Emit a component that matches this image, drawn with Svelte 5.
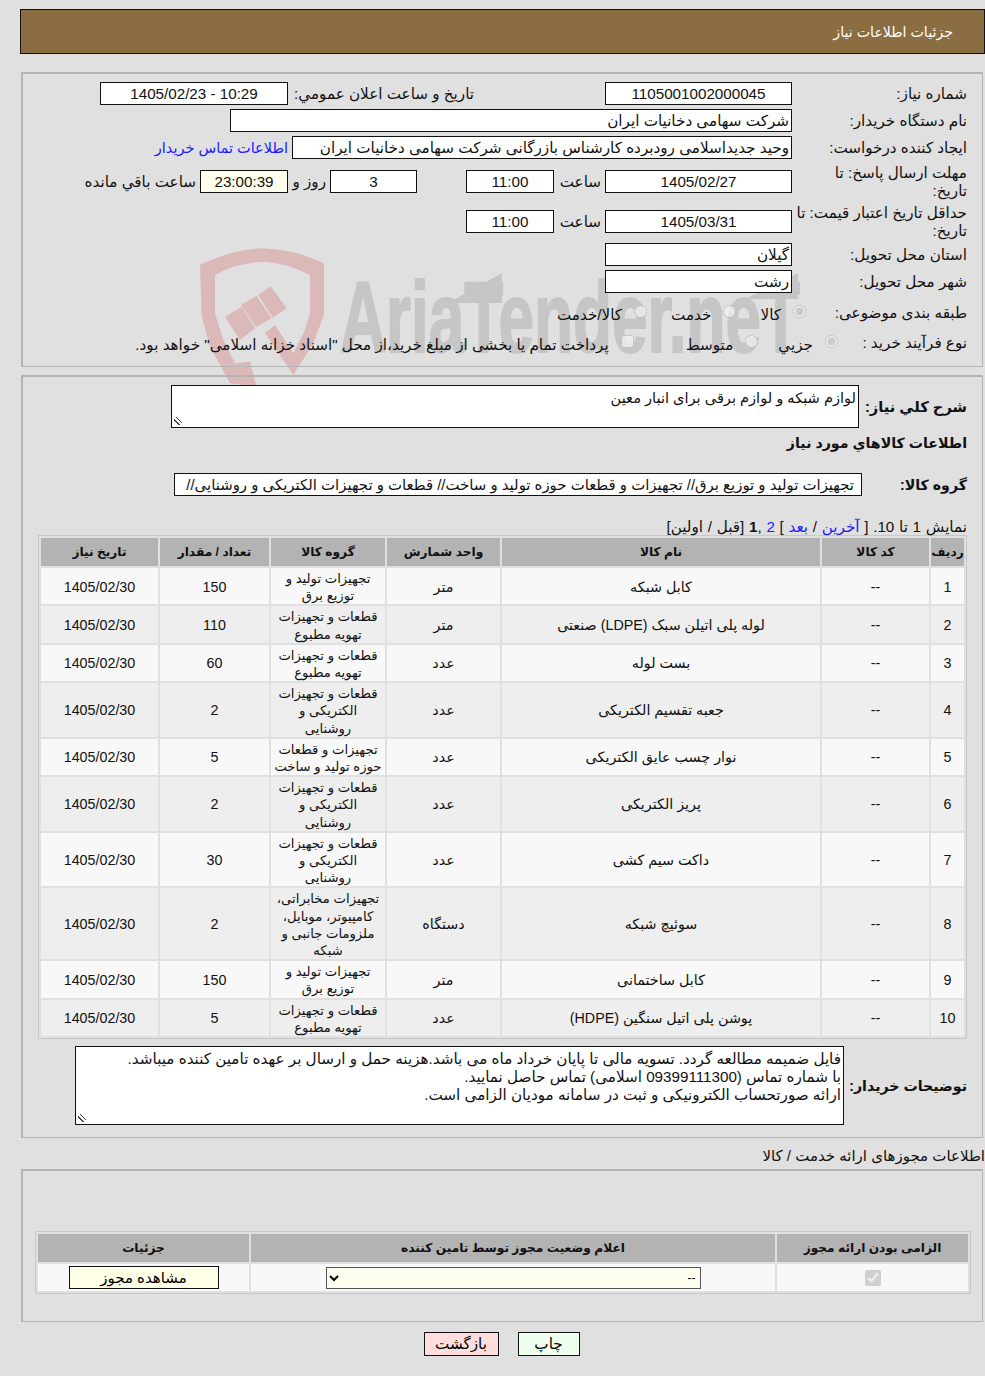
<script>
	const rows = [
		{ name: 'کابل شبکه', unit: 'متر', group: ['تجهیزات تولید و', 'توزیع برق'], qty: 150 },
		{ name: 'لوله پلی اتیلن سبک (LDPE) صنعتی', unit: 'متر', group: ['قطعات و تجهیزات', 'تهویه مطبوع'], qty: 110 },
		{ name: 'بست لوله', unit: 'عدد', group: ['قطعات و تجهیزات', 'تهویه مطبوع'], qty: 60 },
		{ name: 'جعبه تقسیم الکتریکی', unit: 'عدد', group: ['قطعات و تجهیزات', 'الکتریکی و', 'روشنایی'], qty: 2 },
		{ name: 'نوار چسب عایق الکتریکی', unit: 'عدد', group: ['تجهیزات و قطعات', 'حوزه تولید و ساخت'], qty: 5 },
		{ name: 'پریز الکتریکی', unit: 'عدد', group: ['قطعات و تجهیزات', 'الکتریکی و', 'روشنایی'], qty: 2 },
		{ name: 'داکت سیم کشی', unit: 'عدد', group: ['قطعات و تجهیزات', 'الکتریکی و', 'روشنایی'], qty: 30 },
		{ name: 'سوئیچ شبکه', unit: 'دستگاه', group: ['تجهیزات مخابراتی،', 'کامپیوتر، موبایل،', 'ملزومات جانبی و', 'شبکه'], qty: 2 },
		{ name: 'کابل ساختمانی', unit: 'متر', group: ['تجهیزات تولید و', 'توزیع برق'], qty: 150 },
		{ name: 'پوشن پلی اتیل سنگین (HDPE)', unit: 'عدد', group: ['قطعات و تجهیزات', 'تهویه مطبوع'], qty: 5 }
	];
</script>

<div class="page">
	<!-- watermark sits behind the panels; coordinates are page pixels -->
	<svg class="mark" width="985" height="400" viewBox="0 0 985 400" aria-hidden="true">
		<g transform="translate(180 240) scale(0.3333)" fill="#dcb9b9">
			<path d="M60 75 Q150 30 250 25 Q350 30 432 70 L432 225 L400 310 L340 405 L255 280 L285 255 L340 340 L375 270 L390 220 L390 105 Q320 68 250 65 Q170 68 105 105 L105 220 L130 300 L165 370 L210 365 L230 440 L150 430 L90 320 L65 230 Z" />
			<path d="M135 230 L185 200 L225 265 L180 300 Z" />
			<path d="M183 195 L230 168 L275 235 L228 262 Z" />
			<path d="M235 165 L272 138 L320 205 L278 233 Z" />
		</g>
		<g fill="#c6c6c6">
			<text class="mark-text" x="340" y="352" textLength="460" lengthAdjust="spacingAndGlyphs">AriaTender.neT</text>
			<polygon points="448,303 502,273 502,303" />
			<polygon points="745,299 798,273 798,299" />
		</g>
	</svg>

	<header class="title">جزئیات اطلاعات نیاز</header>

	<section class="panel first">
		<div class="row">
			<span class="lbl">شماره نیاز:</span>
			<span class="box w187">1105001002000045</span>
			<span class="lbl2">تاریخ و ساعت اعلان عمومي:</span>
			<span class="box w188">10:29 - 1405/02/23</span>
		</div>
		<div class="row">
			<span class="lbl">نام دستگاه خریدار:</span>
			<span class="box start w562">شرکت سهامی دخانیات ایران</span>
		</div>
		<div class="row">
			<span class="lbl">ایجاد کننده درخواست:</span>
			<span class="box start w500">وحید جدیداسلامی رودبرده کارشناس بازرگانی شرکت سهامی دخانیات ایران</span>
			<a class="link" href="#contact">اطلاعات تماس خریدار</a>
		</div>
		<div class="row tall">
			<span class="lbl wrap">مهلت ارسال پاسخ: تا<br />تاریخ:</span>
			<span class="box w187">1405/02/27</span>
			<span class="txt w51">ساعت</span>
			<span class="box w88">11:00</span>
			<span class="box w87 gap49">3</span>
			<span class="txt w42">روز و</span>
			<span class="box w88 ivory">23:00:39</span>
			<span class="txt">ساعت باقي مانده</span>
		</div>
		<div class="row tall">
			<span class="lbl wrap">حداقل تاریخ اعتبار قیمت: تا<br />تاریخ:</span>
			<span class="box w187">1405/03/31</span>
			<span class="txt w51">ساعت</span>
			<span class="box w88">11:00</span>
		</div>
		<div class="row">
			<span class="lbl">استان محل تحویل:</span>
			<span class="box start w187">گیلان</span>
		</div>
		<div class="row">
			<span class="lbl">شهر محل تحویل:</span>
			<span class="box start w187">رشت</span>
		</div>
		<div class="row radios r1">
			<span class="lbl">طبقه بندی موضوعی:</span>
			<label><input type="radio" name="cat" checked disabled />کالا</label>
			<label><input type="radio" name="cat" disabled />خدمت</label>
			<label><input type="radio" name="cat" disabled />کالا/خدمت</label>
		</div>
		<div class="row radios r2">
			<span class="lbl">نوع فرآیند خرید :</span>
			<label><input type="radio" name="kind" checked disabled />جزیي</label>
			<label><input type="radio" name="kind" disabled />متوسط</label>
			<label><input type="checkbox" disabled />پرداخت تمام یا بخشی از مبلغ خرید،از محل "اسناد خزانه اسلامی" خواهد بود.</label>
		</div>
	</section>

	<section class="panel second">
		<div class="desc">
			<b class="blbl">شرح کلي نیاز:</b>
			<div class="area short">لوازم شبکه و لوازم برقی برای انبار معین</div>
		</div>
		<h2>اطلاعات کالاهاي مورد نیاز</h2>
		<div class="goods">
			<b class="blbl">گروه کالا:</b>
			<div class="box start group">تجهیزات تولید و توزیع برق// تجهیزات و قطعات حوزه تولید و ساخت// قطعات و تجهیزات الکتریکی و روشنایی//</div>
		</div>
		<p class="pager">نمایش 1 تا 10. [ <a href="#l">آخرین</a> / <a href="#n">بعد</a> ] <a href="#2">2</a> ,<b>1</b> [قبل / اولین]</p>
		<table class="items">
			<colgroup>
				<col style="width:33px" /><col style="width:107px" /><col style="width:318px" /><col style="width:113px" />
				<col style="width:114px" /><col style="width:109px" /><col style="width:117px" />
			</colgroup>
			<thead>
				<tr><th>ردیف</th><th>کد کالا</th><th>نام کالا</th><th>واحد شمارش</th><th>گروه کالا</th><th>تعداد / مقدار</th><th>تاریخ نیاز</th></tr>
			</thead>
			<tbody>
				{#each rows as r, i}
					<tr>
						<td>{i + 1}</td>
						<td>--</td>
						<td>{r.name}</td>
						<td>{r.unit}</td>
						<td class="grp">
							{#each r.group as line}
								<div>{line}</div>
							{/each}
						</td>
						<td>{r.qty}</td>
						<td>1405/02/30</td>
					</tr>
				{/each}
			</tbody>
		</table>
		<div class="notes">
			<b class="blbl">توضیحات خریدار:</b>
			<div class="area long">فایل ضمیمه مطالعه گردد. تسویه مالی تا پایان خرداد ماه می باشد.هزینه حمل و ارسال بر عهده تامین کننده میباشد.<br />با شماره تماس (09399111300 اسلامی) تماس حاصل نمایید.<br />ارائه صورتحساب الکترونیکی و ثبت در سامانه مودیان الزامی است.</div>
		</div>
	</section>

	<div class="license-title">اطلاعات مجوزهای ارائه خدمت / کالا</div>

	<section class="panel third">
		<table class="licenses">
			<colgroup><col style="width:191px" /><col style="width:524px" /><col style="width:211px" /></colgroup>
			<thead>
				<tr><th>الزامی بودن ارائه مجوز</th><th>اعلام وضعیت مجوز توسط تامین کننده</th><th>جزئیات</th></tr>
			</thead>
			<tbody>
				<tr>
					<td><input type="checkbox" checked disabled /></td>
					<td><select class="status"><option>--</option></select></td>
					<td><button class="view">مشاهده مجوز</button></td>
				</tr>
			</tbody>
		</table>
	</section>

	<div class="actions">
		<button class="print">چاپ</button>
		<button class="back">بازگشت</button>
	</div>
</div>

<style>
	:global(body) {
		background: #e0e0e0;
	}

	.page {
		position: relative;
		direction: rtl;
		width: 985px;
		height: 1376px;
		overflow: hidden;
		font-family: 'Liberation Sans', 'DejaVu Sans', sans-serif;
		font-size: 15.2px;
		color: #111;
		padding-top: 9px;
		box-sizing: border-box;
	}

	.mark {
		position: absolute;
		left: 0;
		top: 0;
	}

	.mark-text {
		font-family: 'Liberation Sans', sans-serif;
		font-weight: 700;
		font-size: 100px;
		direction: ltr;
		stroke: #c6c6c6;
		stroke-width: 2px;
	}

	.title {
		position: relative;
		box-sizing: border-box;
		height: 45px;
		margin-left: 20px;
		padding: 14px 31px 0 0;
		background: #8b6d42;
		border: 1px solid #111;
		color: #fff;
		font-size: 14.2px;
	}

	.panel {
		position: relative;
		box-sizing: border-box;
		margin: 0 2px 0 21px;
		border: 1px solid #b4b4b4;
		border-top-width: 2px;
		border-left-width: 2px;
	}

	.first {
		margin-top: 18px;
		height: 295px;
		padding: 8px 15px 0 0;
	}

	.second {
		margin-top: 8px;
		height: 763px;
		padding: 8px 15px 0 0;
	}

	.third {
		height: 153px;
		padding: 60px 11px 0 0;
	}

	.row {
		display: flex;
		align-items: center;
		height: 23px;
		margin-bottom: 4px;
	}

	.tall {
		height: 36px;
	}

	.lbl {
		box-sizing: border-box;
		width: 175px;
		flex: none;
		line-height: 18px;
		white-space: nowrap;
	}

	.wrap {
		padding-top: 2px;
	}

	.box {
		box-sizing: border-box;
		flex: none;
		height: 23px;
		line-height: 21px;
		border: 1px solid #111;
		background: #fff;
		text-align: center;
		overflow: hidden;
		white-space: nowrap;
	}

	.start {
		text-align: right;
		padding-right: 2px;
	}

	.w187 { width: 187px; }
	.w188 { width: 188px; }
	.w562 { width: 562px; }
	.w500 { width: 500px; }
	.w88 { width: 88px; }
	.w87 { width: 87px; }

	.ivory {
		background: #ffffee;
	}

	.gap49 {
		margin-right: 49px;
	}

	.lbl2 {
		box-sizing: border-box;
		margin-right: 131px;
		white-space: nowrap;
		width: 186px;
	}

	.link {
		margin-right: 4px;
		color: #1a1aff;
		font-size: 14.5px;
		text-decoration: none;
		white-space: nowrap;
	}

	.txt {
		box-sizing: border-box;
		flex: none;
		padding: 1px 4px 0 0;
		white-space: nowrap;
	}

	.w51 { width: 51px; }
	.w42 { width: 42px; }

	.radios label {
		display: flex;
		align-items: center;
		white-space: nowrap;
		padding-top: 3px;
	}

	.radios input {
		flex: none;
		width: 13px;
		height: 13px;
		margin: -6px 0 0 12px;
	}

	.r1 {
		height: 26px;
		margin-top: 7px;
		margin-bottom: 4px;
	}

	.r1 .lbl { width: 161px; }
	.r1 label:nth-child(3) { margin-right: 24px; }
	.r1 label:nth-child(4) { margin-right: 24px; }

	.r2 {
		height: 26px;
	}

	.r2 .lbl { width: 129px; }
	.r2 label:nth-child(3) { margin-right: 20px; }
	.r2 label:nth-child(4) { margin-right: 52px; }

	.blbl {
		flex: none;
		font-size: 14.2px;
		white-space: nowrap;
	}

	.desc,
	.goods,
	.notes {
		display: flex;
		align-items: center;
	}

	.desc .blbl { width: 108px; font-size: 14.7px; }
	.goods .blbl { width: 105px; }
	.notes .blbl { width: 123px; }

	.area {
		box-sizing: border-box;
		flex: none;
		border: 1px solid #111;
		background: #fff;
		padding: 3px 2px;
		line-height: 18px;
		position: relative;
	}

	.area::after {
		content: '';
		position: absolute;
		left: 2px;
		bottom: 2px;
		width: 8px;
		height: 8px;
		background: linear-gradient(45deg, transparent 28%, #444 28%, #444 38%, transparent 38%, transparent 58%, #444 58%, #444 68%, transparent 68%);
	}

	.short {
		width: 688px;
		height: 43px;
		font-size: 14.6px;
	}

	.long {
		width: 769px;
		height: 79px;
	}

	h2 {
		margin: 5px 0 0;
		font-size: 14.2px;
		line-height: 20px;
	}

	.goods {
		margin-top: 20px;
	}

	.group {
		width: 688px;
		padding-right: 7px;
		font-size: 14.9px;
		line-height: 22px;
	}

	.pager {
		margin: 22px 0 0;
		line-height: 17px;
		height: 17px;
		word-spacing: 0.5px;
	}

	.pager a {
		color: #1a1aff;
		text-decoration: none;
	}

	table {
		border-collapse: separate;
		border-spacing: 2px;
		table-layout: fixed;
		border: 1px solid #c8c8c8;
	}

	.items {
		width: 929px;
		font-size: 14.3px;
	}

	th {
		background: #b3b3b3;
		font-size: 12.2px;
		font-weight: 700;
		height: 28px;
		padding: 0;
		text-align: center;
	}

	td {
		padding: 2px 1px 0;
		line-height: 17.2px;
		background: #f8f8f8;
		text-align: center;
	}

	.items td {
		height: 34px;
	}

	.items td.grp {
		padding: 2px 0 0;
		font-size: 13.2px;
		white-space: nowrap;
	}

	.items tbody tr:nth-child(even) td {
		background: #eeeeee;
	}

	.notes {
		margin-top: 7px;
	}

	.license-title {
		position: relative;
		height: 31px;
		padding-top: 9px;
		box-sizing: border-box;
		line-height: 17px;
		font-size: 15px;
		white-space: nowrap;
	}

	.licenses {
		width: 936px;
	}

	.licenses td {
		height: 27px;
		padding: 0;
	}

	.licenses input {
		display: block;
		margin: 0 auto;
		width: 16px;
		height: 16px;
	}

	.status {
		display: block;
		margin: 0 auto;
		width: 375px;
		height: 22px;
		background: #fdfdf0;
		border: 1px solid #555;
		font: inherit;
		font-size: 12px;
	}

	.view {
		display: block;
		margin: 0 auto;
		width: 150px;
		height: 23px;
		border: 1px solid #111;
		background: #ffffe8;
		font: inherit;
		font-size: 15px;
		padding: 0;
	}

	.actions {
		position: relative;
		display: flex;
		justify-content: center;
		gap: 19px;
		margin-top: 10px;
		padding-left: 18px;
	}

	.actions button {
		height: 24px;
		border: 1px solid #111;
		font: inherit;
		padding: 0;
	}

	.back {
		width: 75px;
		background: #ffdddd;
	}

	.print {
		width: 62px;
		background: #eeffee;
	}
</style>
